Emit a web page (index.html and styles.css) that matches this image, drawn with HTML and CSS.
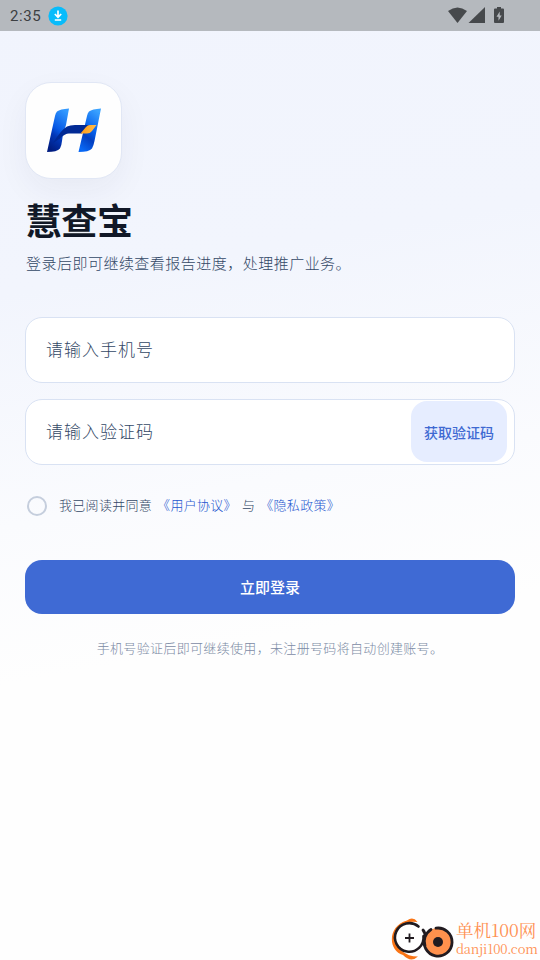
FILE: index.html
```html
<!DOCTYPE html>
<html lang="zh-CN">
<head>
<meta charset="utf-8">
<title>慧查宝</title>
<link rel="stylesheet" href="styles.css">
</head>
<body>
<header class="status">
  <span class="time">2:35</span>
  <svg class="download" width="20" height="20" viewBox="0 0 20 20"><circle cx="10" cy="10" r="9.6" fill="#08bcfb"/><path d="M10 4.500v6.500M6.800 8l3.200 3.200L13.200 8M6.800 14h6.400" fill="none" stroke="#fff" stroke-width="1.700"/></svg>
  <svg class="signals" width="58" height="18" viewBox="0 0 58 18"><g fill="#46494c"><path d="M0 4Q9.500-3 19 4L9.500 16Z"/><path d="M37 0v16H20.500Z"/><path d="M48 0h4v1.500h2q1 0 1 1V15q0 1-1 1h-8q-1 0-1-1V2.500q0-1 1-1h2Z" transform="translate(1)"/></g><path d="M51.700 4.500l-3.200 5.200h2v4l3.200-5.200h-2Z" fill="#b5b9be"/></svg>
</header>
<main class="page">
  <div class="logo">
    <svg width="96" height="96" viewBox="0 0 96 96">
      <defs>
        <linearGradient id="left" x1=".7" y1="0" x2=".3" y2="1"><stop offset="0" stop-color="#3299ff"/><stop offset=".48" stop-color="#0658e5"/><stop offset=".65" stop-color="#0238b8"/><stop offset="1" stop-color="#001c80"/></linearGradient>
        <linearGradient id="right" x1=".7" y1="0" x2=".3" y2="1"><stop offset="0" stop-color="#3aa2ff"/><stop offset=".45" stop-color="#0863ed"/><stop offset=".68" stop-color="#033fc0"/><stop offset="1" stop-color="#0868f5"/></linearGradient>
        <linearGradient id="gold"><stop offset="0" stop-color="#ff9c18"/><stop offset="1" stop-color="#ffbd49"/></linearGradient>
      </defs>
      <path d="M43 25.500Q34 26 31 28.500Q29.500 30 29 33L21 69Q31 69 34 65.500Q35.500 63 36 58L37 51 40 42Z" fill="url(#left)"/>
      <path d="M75 25.500Q66 26 63 28.500Q61.500 30 61 33L52.500 69Q63 69 66 65.500Q67.500 63 68.500 58Z" fill="url(#right)"/>
      <path d="M27 60Q35 47 41 43.500Q44 42 49 42H63L56 50.500H43Q39 50.500 34 55.500Z" fill="#012a95"/>
      <path d="M54.500 50.500L60 44Q61.500 42 64 42H70.500L66 48Q64 50.500 61 50.500Z" fill="url(#gold)"/>
    </svg>
  </div>
  <h1 class="title">慧查宝</h1>
  <p class="subtitle">登录后即可继续查看报告进度，处理推广业务。</p>
  <div class="field"><span class="hint">请输入手机号</span></div>
  <div class="field"><span class="hint">请输入验证码</span><span class="code">获取验证码</span></div>
  <div class="agree"><span class="radio"></span><span>我已阅读并同意</span><a class="link user">《用户协议》</a><span class="and">与</span><a class="link privacy">《隐私政策》</a></div>
  <div class="login">立即登录</div>
  <p class="note">手机号验证后即可继续使用，未注册号码将自动创建账号。</p>
</main>
<footer class="watermark">
  <svg width="65" height="43" viewBox="0 0 65 43">
    <path d="M26.500 5Q22-1 16 3.500C-4 9-3 34 12 38Q20 46 27 39.500Q17 39.500 11 34C-1 25 1 11 15 6Q20 4 26.500 5Z" fill="#f97516"/>
    <path d="M27.500 9.500A14.300 14.300 0 1 0 32.500 19" fill="#fff" stroke="#211b20" stroke-width="2.600" stroke-linecap="round"/>
    <path d="M18.500 16.500v9M14 21h9" stroke="#211b20" stroke-width="1.800"/>
    <circle cx="47" cy="25" r="14" fill="#ff914d"/>
    <path d="M45 11.200A14 14 0 1 1 34 20Q36 15 40 12.500M32 13Q34.500 16 34 20Q32.500 24 34 29" fill="none" stroke="#211b20" stroke-width="2.800" stroke-linecap="round"/>
    <circle cx="47" cy="25" r="5" fill="#211b20"/>
  </svg>
  <div class="brand"><span class="brand-name">单机100网</span><span class="brand-url">danji100.com</span></div>
</footer>
</body>
</html>
```
FILE: styles.css
```css
* { box-sizing: border-box; }
body {
  margin: 0;
  height: 960px;
  overflow: hidden;
  display: flex;
  flex-direction: column;
  font-family: "Noto Sans CJK SC", sans-serif;
  font-weight: 300;
  background: linear-gradient(170deg, #f1f4fd 0, #f2f5fd 28%, #fafbfe 50%, #fefefe 65%);
}
.status {
  height: 31px;
  flex: none;
  display: flex;
  align-items: center;
  padding: 0 34px 0 10px;
  background: #b5b9be;
}
.time {
  width: 38px;
  font: 400 15px/20px Roboto, sans-serif;
  letter-spacing: .6px;
  color: #3c3f42;
}
.signals { margin: 0 0 0 auto; }
.page { padding: 51px 25px 0; flex: 1; }
.logo {
  width: 97px;
  height: 97px;
  border: 1px solid #e1e7f5;
  border-radius: 26px;
  background: #fefefe;
  box-shadow: 0 12px 32px rgba(30, 45, 70, .05);
}
.logo svg { display: block; }
.title {
  margin: 14px 0 0 .5px;
  font-size: 36px;
  line-height: 52px;
  letter-spacing: -.3px;
  color: #111827;
}
.subtitle {
  margin: 7px 0 42.500px 1px;
  font-size: 15px;
  line-height: 22px;
  letter-spacing: .48px;
  color: #334866;
}
.field {
  height: 66px;
  display: flex;
  align-items: center;
  justify-content: space-between;
  margin-bottom: 16px;
  padding: 0 7px 0 20px;
  border: 1.500px solid #d9e2f3;
  border-radius: 17px;
  background: #fff;
  font-size: 17px;
  letter-spacing: 1px;
  color: #334866;
}
.hint { padding-bottom: 2px; }
.code {
  width: 96px;
  height: 61px;
  line-height: 63px;
  border-radius: 16px;
  background: #e6edff;
  text-align: center;
  font-size: 14px;
  font-weight: 500;
  letter-spacing: 0;
  color: #3e69d2;
}
.agree {
  display: flex;
  align-items: center;
  margin-top: 31px;
  height: 20px;
  padding-left: 2px;
  font-size: 13px;
  line-height: 18px;
  letter-spacing: .3px;
  color: #334866;
}
.agree span, .agree a { margin-top: -1px; }
.agree .radio {
  width: 20px;
  height: 20px;
  margin: 0 12px 0 0;
  border: 2px solid #c5cedd;
  border-radius: 50%;
}
.agree .link { color: #2456cf; }
.user { margin-left: 5px; }
.and { margin: 0 5px; }
.login {
  height: 54px;
  margin-top: 44.500px;
  border-radius: 17px;
  background: #3f6ad4;
  color: #fff;
  text-align: center;
  font-size: 15px;
  line-height: 54px;
  font-weight: 500;
}
.note {
  margin: 24px 0 0;
  text-align: center;
  font-size: 13px;
  line-height: 20px;
  letter-spacing: .33px;
  color: #7c8ba5;
}
.watermark {
  height: 43px;
  display: flex;
  justify-content: flex-end;
  color: #ff9153;
  font-weight: 400;
}
.brand {
  display: flex;
  flex-direction: column;
  width: 84px;
  white-space: nowrap;
  font-family: "Noto Serif CJK SC", "Liberation Serif", "Noto Sans CJK SC", serif;
}
.brand-name { font-size: 17.500px; line-height: 25px; }
.brand-url { font-size: 13px; line-height: 14px; letter-spacing: -.2px; }
```
